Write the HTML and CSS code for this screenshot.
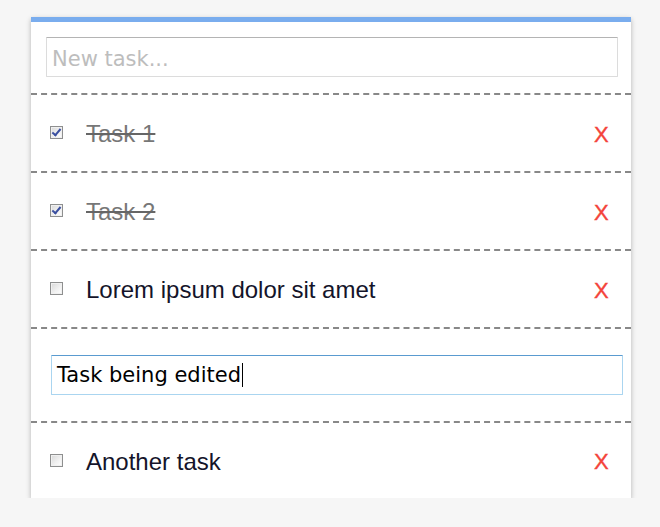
FILE: index.html
```html
<!DOCTYPE html>
<html>
<head>
<meta charset="utf-8">
<link rel="stylesheet" href="styles.css">
</head>
<body>
<div class="card">
  <div class="new-wrap">
    <input class="new-input" type="text" placeholder="New task...">
  </div>
  <ul class="list">
    <li class="row done">
      <span class="check checked"></span>
      <span class="label">Task 1</span>
      <span class="del">X</span>
    </li>
    <li class="row done">
      <span class="check checked"></span>
      <span class="label">Task 2</span>
      <span class="del">X</span>
    </li>
    <li class="row">
      <span class="check"></span>
      <span class="label">Lorem ipsum dolor sit amet</span>
      <span class="del">X</span>
    </li>
    <li class="row edit-row">
      <div class="edit-input"><span class="edit-text">Task being edited</span><span class="caret"></span></div>
    </li>
    <li class="row last">
      <span class="check"></span>
      <span class="label">Another task</span>
      <span class="del">X</span>
    </li>
  </ul>
</div>
</body>
</html>
```

FILE: styles.css
```css
html, body {
  margin: 0;
  padding: 0;
  background: #f6f6f6;
}
body {
  padding-top: 17px;
  padding-left: 31px;
}
.card {
  width: 600px;
  background: #fff;
  border-top: 5px solid #7aadee;
  box-shadow: 0 2px 5px rgba(0,0,0,0.28);
}
.new-wrap {
  padding: 15px 13px 16px 15px;
}
.new-input {
  display: block;
  box-sizing: border-box;
  width: 572px;
  height: 40px;
  margin: 0;
  border: 1px solid #dcdcdc;
  border-top-color: #b4b4b4;
  border-radius: 1px;
  padding: 3px 5px 0;
  font-family: "DejaVu Sans", sans-serif;
  font-size: 21px;
  color: #222;
  outline: none;
  background: #fff;
}
.new-input::placeholder {
  color: #bdbdbd;
}
.list {
  list-style: none;
  margin: 0;
  padding: 0;
}
.row {
  display: flex;
  align-items: center;
  height: 76px;
  border-top: 2px dashed #888;
  padding: 0 23px 0 19px;
}
.row.last {
  height: 75px;
}
.check {
  box-sizing: border-box;
  width: 13px;
  height: 13px;
  border: 1px solid #8e8f8f;
  background: linear-gradient(135deg, #d8d8d8 0%, #f2f2f2 60%, #fff 100%);
  box-shadow: inset 0 0 0 1px #f0f0f0;
  position: relative;
  flex: none;
  margin-top: -1px;
}
.check.checked::after {
  content: "";
  position: absolute;
  left: 3px;
  top: 0px;
  width: 3px;
  height: 7px;
  border: solid #3a4fa0;
  border-width: 0 2px 2px 0;
  transform: rotate(40deg);
}
.label {
  flex: 1;
  margin-left: 23px;
  padding-top: 2px;
  font-family: "Liberation Sans", Arial, sans-serif;
  font-size: 24px;
  color: #14142a;
}
.done .label {
  color: #777;
  text-decoration: line-through;
  text-decoration-color: #666;
}
.del {
  font-family: "Liberation Sans", Arial, sans-serif;
  font-size: 22px;
  color: #f4433a;
  width: 14px;
  text-align: center;
  padding-top: 3px;
  -webkit-text-stroke: 0.4px #f4433a;
}
.edit-row {
  height: 92px;
  padding: 0 8px 0 20px;
}
.edit-input {
  box-sizing: border-box;
  width: 572px;
  height: 40px;
  border: 1px solid #aad5f0;
  border-top-color: #5a9bd0;
  border-radius: 1px;
  padding: 0 5px;
  display: flex;
  align-items: center;
  font-family: "DejaVu Sans", sans-serif;
  font-size: 21px;
  color: #000;
  margin-top: -1px;
}
.caret {
  display: inline-block;
  width: 1px;
  height: 24px;
  background: #000;
  margin-left: 1px;
}
```
